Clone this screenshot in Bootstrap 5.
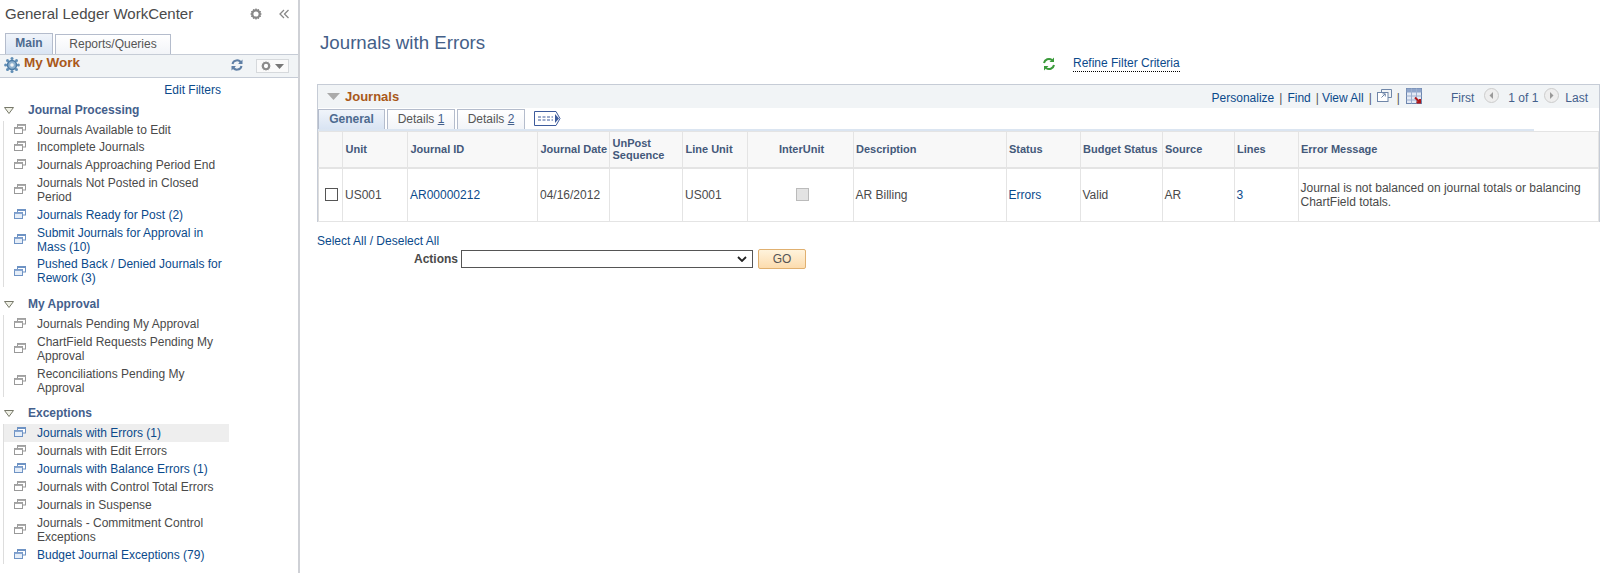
<!DOCTYPE html>
<html lang="en"><head><meta charset="utf-8"><title>Journals with Errors</title>
<link rel="stylesheet" href="https://cdn.jsdelivr.net/npm/bootstrap@5.3.0/dist/css/bootstrap.min.css">
<style>
html,body{height:100%;overflow:hidden}
body{font-family:"Liberation Sans",Arial,sans-serif;font-size:12px;color:#333;background:#fff;line-height:14px}
a{color:#0b4a8b;text-decoration:none}
.shell{height:573px}
.wc-side{width:300px;flex:none;border-right:2px solid #cfd1d6;height:573px}
.wc-title{font-size:15px;line-height:20px;padding:4px 0 0 5px;height:33px;color:#4a4a4a}
.wc-tabs{padding-left:5px;height:21px;gap:2px}
.wc-tab{border:1px solid #b4bccc;border-bottom:0;height:21px;text-align:center;line-height:19px;color:#555;background:linear-gradient(#fff,#f2f4f8)}
.wc-tab-on{width:48px;font-weight:700;color:#4d6a8f;background:linear-gradient(#f0f4fa,#d9e4f3)}
.wc-tab-off{width:116px;height:20px;margin-top:1px}
.mywork{height:24px;background:#f1f4f6;border-top:1px solid #c6ccd6;border-bottom:1px solid #c6ccd6;padding:0 9px 0 4px}
.mw-ic{margin-top:-3px}
.mywork-t{font-size:13.5px;font-weight:700;color:#a9581a;margin-left:4px;margin-top:-6px}
.mw-ref{margin-top:-3px}
.gearbtn{width:33px;height:14px;border:1px solid #d6d9dc;background:#fafafa;margin-left:13px}
.edit-f{width:221px;text-align:right;padding-top:5px;height:24px}
.sec-h{font-size:12px;font-weight:700;color:#44608c;line-height:16px;height:16px;padding-left:4px;margin-bottom:3px}
.sec-h span{margin-left:14px}
.sec-l{margin-left:3px;border-left:1px solid #ddd;width:226px}
.it{padding:2px 0;min-height:18px;color:#4a4a4a;padding-left:33px;position:relative}
.it svg{position:absolute;left:10px;top:50%;margin-top:-6px}
.it-on{background:#eee}
.it-tight{padding-top:1px}
.it-first{padding-bottom:1px;min-height:17px}
.sec-gap{height:8px}
.sec-gap-w{height:9px}
.wc-main{padding:0 7px 0 17px;min-width:0}
.pg-title{font-size:18.7px;line-height:22px;color:#446088;padding:32px 0 0 3px;height:54px}
.refine{height:30px;padding-left:725px;padding-top:3px}
.refine a{border-bottom:1px dotted #000;padding-bottom:2px;margin-left:17px;display:inline-block;line-height:12px}
.gridbox{border:1px solid #c6ccd6;border-bottom:0}
.grid-h{height:23px;background:#f1f4f6;padding:0 11px 0 9px}
.grid-t{font-size:13px;font-weight:700;color:#a9581a;margin-left:5px}
.grid-n{color:#44608c;padding-top:2px}
.grid-n svg{margin-top:-4px}
.sp-a{margin:0 5px}
.sp-b{margin:0 3px 0 5px}
.sp-c{margin:0 5px}
.sp-d{margin:0 6px 0 5px}
.pg-first{margin-left:29px}
.pg-c1{margin:0 9px 0 10px}
.pg-c2{margin:0 6px}
.sp-bar{color:#555}
.gtabs{height:21px;padding-top:1px;gap:2px}
.gt{height:20px;border:1px solid #b4bccc;border-bottom:0;line-height:18px;text-align:center;color:#555;background:linear-gradient(#fff,#f2f4f8)}
.gt u{color:#44608c}
.gt-on{font-weight:700;color:#4d6a8f;width:67px;background:linear-gradient(#f0f4fa,#d9e4f3)}
.gt-off{width:68px}
.gt-more{margin:2px 0 0 7px}
.gbar{height:2px;background:#dbe5f1;margin-right:65px}
.jt{width:100%;table-layout:fixed;border-collapse:collapse;font-size:12px;margin:0;border-left:1px solid #ddd}
.jt th{background:#f8f8f8;color:#44597a;font-size:11px;line-height:12px;font-weight:700;height:36px;padding:0 0 0 2.5px;border-right:1px solid #e4e4e4;border-top:1px solid #e4e4e4;border-bottom:2px solid #e4e4e4;vertical-align:middle}
.jt td{height:54px;padding:0 3px 0 2px;border-right:1px solid #e4e4e4;border-bottom:1px solid #e4e4e4;vertical-align:middle;background:#fff;color:#4a4a4a}
.ck{width:13px;height:13px;border:1px solid #555;display:block;margin:0 0 0 6px}
.ck-d{width:13px;height:13px;border:1px solid #bbb;background:#e3e3e3;display:block;margin:0 0 0 46px}
.sel-all{padding-top:12px;line-height:15px}
.act{height:20px}
.act b{width:144px;text-align:right;padding-right:3px;color:#4a4a4a}
.act-s{width:292px;height:18px;border:1px solid #555;background:#fff;padding-right:5px}
.go{width:48px;height:20px;margin-left:5px;border:1px solid #e0b070;border-radius:2px;background:linear-gradient(#fff3dc,#fcdcae);color:#555;text-align:center;line-height:18px}
</style></head>
<body>
<svg width="0" height="0" class="d-block"><defs>
<symbol id="w-g" viewBox="0 0 12 10"><rect x="3.500" y=".5" width="8" height="5.500" fill="#fff" stroke="#999"/><rect x="3.500" y=".5" width="8" height="1.500" fill="#aaa"/><rect x=".5" y="3.500" width="8" height="6" fill="#fff" stroke="#999"/><rect x=".5" y="3.500" width="8" height="1.500" fill="#aaa"/></symbol>
<symbol id="w-b" viewBox="0 0 12 10"><rect x="3.500" y=".5" width="8" height="5.500" fill="#fff" stroke="#6f93c4"/><rect x="3.500" y=".5" width="8" height="1.500" fill="#6f93c4"/><rect x=".5" y="3.500" width="8" height="6" fill="#e6eef8" stroke="#6f93c4"/><rect x=".5" y="3.500" width="8" height="1.500" fill="#8aa8d2"/></symbol>
<symbol id="tri" viewBox="0 0 10 7"><path d="M.5.5h9L5 6.500z" fill="#f0f1e6" stroke="#77786a"/></symbol>
<symbol id="gear" viewBox="0 0 14 14"><path d="M7 0l1.200 1.800 2.200-.6.500 2 2 .5-.6 2.200L14 7l-1.700 1.100.6 2.200-2 .5-.5 2-2.200-.6L7 14l-1.200-1.800-2.200.6-.5-2-2-.5.6-2.200L0 7l1.700-1.100-.6-2.200 2-.5.500-2 2.200.6z" fill="#888"/><circle cx="7" cy="7" r="3" fill="#fff"/></symbol>
</defs></svg>
<div class="d-flex shell">
<aside class="wc-side">
 <div class="wc-title d-flex justify-content-between"><span>General Ledger WorkCenter</span>
  <span class="d-flex pe-2 pt-1 align-items-start gap-3"><svg width="12" height="12"><use href="#gear"/></svg><svg width="12" height="12" viewBox="0 0 12 12" fill="none" stroke="#888" stroke-width="1.300"><path d="M6 2L2 6l4 4M10.500 2l-4 4 4 4"/></svg></span></div>
 <div class="wc-tabs d-flex"><div class="wc-tab wc-tab-on">Main</div><div class="wc-tab wc-tab-off">Reports/Queries</div></div>
 <div class="mywork d-flex align-items-center">
  <svg class="mw-ic" width="16" height="16" viewBox="0 0 16 16"><g fill="#5f8db5"><circle cx="8" cy="1.600" r="1.500"/><circle cx="8" cy="14.400" r="1.500"/><circle cx="1.600" cy="8" r="1.500"/><circle cx="14.400" cy="8" r="1.500"/><circle cx="3.500" cy="3.500" r="1.500"/><circle cx="12.500" cy="3.500" r="1.500"/><circle cx="3.500" cy="12.500" r="1.500"/><circle cx="12.500" cy="12.500" r="1.500"/></g><circle cx="8" cy="8" r="4.500" fill="#8fb2cf" stroke="#4a7aa5" stroke-width="1.500"/><circle cx="8" cy="8" r="1.800" fill="#f1f4f6"/></svg>
  <span class="mywork-t flex-grow-1">My Work</span>
  <svg class="mw-ref" width="12" height="12" viewBox="0 0 12 12" fill="none" stroke="#5f7fa5" stroke-width="2"><path d="M1.500 5A4.500 4.500 0 0 1 10 4M10.500 7A4.500 4.500 0 0 1 2 8"/><path d="M11.500.5v4.500H7zM.5 11.500V7H5z" fill="#5f7fa5" stroke="none"/></svg>
  <span class="gearbtn d-flex align-items-center justify-content-center gap-1"><svg width="10" height="10"><use href="#gear"/></svg><svg width="9" height="5" viewBox="0 0 9 5"><path d="M0 0h9L4.500 5z" fill="#777"/></svg></span>
 </div>
 <div class="edit-f"><a href="#">Edit Filters</a></div>
 <div class="sec-h d-flex align-items-center"><svg width="10" height="7"><use href="#tri"/></svg><span>Journal Processing</span></div>
 <div class="sec-l">
  <div class="it it-first"><svg width="12" height="10"><use href="#w-g"/></svg>Journals Available to Edit</div>
  <div class="it"><svg width="12" height="10"><use href="#w-g"/></svg>Incomplete Journals</div>
  <div class="it"><svg width="12" height="10"><use href="#w-g"/></svg>Journals Approaching Period End</div>
  <div class="it"><svg width="12" height="10"><use href="#w-g"/></svg>Journals Not Posted in Closed Period</div>
  <div class="it"><svg width="12" height="10"><use href="#w-b"/></svg><a href="#">Journals Ready for Post (2)</a></div>
  <div class="it"><svg width="12" height="10"><use href="#w-b"/></svg><a href="#">Submit Journals for Approval in Mass (10)</a></div>
  <div class="it it-tight"><svg width="12" height="10"><use href="#w-b"/></svg><a href="#">Pushed Back / Denied Journals for Rework (3)</a></div>
 </div>
 <div class="sec-gap-w"></div>
 <div class="sec-h d-flex align-items-center"><svg width="10" height="7"><use href="#tri"/></svg><span>My Approval</span></div>
 <div class="sec-l">
  <div class="it"><svg width="12" height="10"><use href="#w-g"/></svg>Journals Pending My Approval</div>
  <div class="it"><svg width="12" height="10"><use href="#w-g"/></svg>ChartField Requests Pending My Approval</div>
  <div class="it"><svg width="12" height="10"><use href="#w-g"/></svg>Reconciliations Pending My Approval</div>
 </div>
 <div class="sec-gap"></div>
 <div class="sec-h d-flex align-items-center"><svg width="10" height="7"><use href="#tri"/></svg><span>Exceptions</span></div>
 <div class="sec-l">
  <div class="it it-on"><svg width="12" height="10"><use href="#w-b"/></svg><a href="#">Journals with Errors (1)</a></div>
  <div class="it"><svg width="12" height="10"><use href="#w-g"/></svg>Journals with Edit Errors</div>
  <div class="it"><svg width="12" height="10"><use href="#w-b"/></svg><a href="#">Journals with Balance Errors (1)</a></div>
  <div class="it"><svg width="12" height="10"><use href="#w-g"/></svg>Journals with Control Total Errors</div>
  <div class="it"><svg width="12" height="10"><use href="#w-g"/></svg>Journals in Suspense</div>
  <div class="it"><svg width="12" height="10"><use href="#w-g"/></svg>Journals - Commitment Control Exceptions</div>
  <div class="it"><svg width="12" height="10"><use href="#w-b"/></svg><a href="#">Budget Journal Exceptions (79)</a></div>
 </div>
</aside>
<main class="wc-main flex-grow-1">
 <div class="pg-title">Journals with Errors</div>
 <div class="refine d-flex align-items-start"><svg width="14" height="14" viewBox="0 0 14 14" fill="none" stroke="#3a9a3a" stroke-width="2"><path d="M2 6a5 5 0 0 1 8-3M12 8a5 5 0 0 1-8 3"/><path d="M12 .5v4.500H7.500zM2 13.500V9h4.500z" fill="#3a9a3a" stroke="none"/></svg><a href="#">Refine Filter Criteria</a></div>
 <div class="gridbox">
  <div class="grid-h d-flex align-items-center justify-content-between">
   <div class="d-flex align-items-center"><svg width="13" height="8" viewBox="0 0 13 8"><path d="M0 0h13L6.500 7z" fill="#aaa"/></svg><span class="grid-t">Journals</span></div>
   <div class="grid-n d-flex align-items-center">
    <a href="#">Personalize</a><span class="sp-bar sp-a">|</span><a href="#">Find</a><span class="sp-bar sp-b">|</span><a href="#">View All</a><span class="sp-bar sp-c">|</span>
    <svg width="15" height="13" viewBox="0 0 15 13" fill="none" stroke="#6f86a8"><path d="M4.500 3.500V.5h10v8h-3.500"/><rect x=".5" y="3.500" width="10.500" height="9" fill="#fff"/><path d="M4.500 8.500l3.500-3.500M5.500 4.800H8.300V7.500"/></svg>
    <span class="sp-bar sp-d">|</span>
    <svg width="16" height="16" viewBox="0 0 16 16"><rect x=".5" y=".5" width="15" height="15" fill="#e3e9f4" stroke="#6c84ad"/><rect x=".5" y=".5" width="15" height="4" fill="#8fa5ca"/><path d="M.5 8h15M.5 12h15M5.500.5v15M10.500.5v15" stroke="#9db0cf"/><path d="M9 9.500l5 5m0-3.500v3.500h-3.500" stroke="#b01818" stroke-width="2" fill="none"/></svg>
    <span class="pg-first">First</span>
    <svg class="pg-c1" width="15" height="15" viewBox="0 0 15 15"><circle cx="7.500" cy="7.500" r="7" fill="#eee" stroke="#ccc"/><path d="M9 4v7L5.500 7.500z" fill="#999"/></svg>
    <span>1 of 1</span>
    <svg class="pg-c2" width="15" height="15" viewBox="0 0 15 15"><circle cx="7.500" cy="7.500" r="7" fill="#eee" stroke="#ccc"/><path d="M6 4v7l3.500-3.500z" fill="#999"/></svg>
    <span>Last</span>
   </div>
  </div>
  <div class="gtabs d-flex">
   <div class="gt gt-on">General</div><div class="gt gt-off">Details <u>1</u></div><div class="gt gt-off">Details <u>2</u></div>
   <svg class="gt-more" width="27" height="15" viewBox="0 0 27 15"><path d="M.5.5H22l4 7-4 7H.5z" fill="#fff" stroke="#3d5b9c"/><path d="M4 6h15M4 9h15" stroke="#3d5b9c" stroke-dasharray="3 1.500"/><path d="M21 3l4 4.500-4 4.500z" fill="#3d5b9c"/></svg>
  </div>
  <div class="gbar"></div>
  <table class="jt">
   <colgroup><col style="width:24px"><col style="width:65px"><col style="width:130px"><col style="width:72px"><col style="width:73px"><col style="width:65px"><col style="width:105.500px"><col style="width:153px"><col style="width:74px"><col style="width:82px"><col style="width:72px"><col style="width:64px"><col></colgroup>
   <thead><tr><th></th><th>Unit</th><th>Journal ID</th><th>Journal Date</th><th>UnPost Sequence</th><th>Line Unit</th><th class="text-center">InterUnit</th><th>Description</th><th>Status</th><th>Budget Status</th><th>Source</th><th>Lines</th><th>Error Message</th></tr></thead>
   <tbody><tr><td class="p-0"><span class="ck"></span></td><td>US001</td><td><a href="#">AR00000212</a></td><td>04/16/2012</td><td></td><td>US001</td><td><span class="ck-d"></span></td><td>AR Billing</td><td><a href="#">Errors</a></td><td>Valid</td><td>AR</td><td><a href="#">3</a></td><td>Journal is not balanced on journal totals or balancing ChartField totals.</td></tr></tbody>
  </table>
 </div>
 <div class="sel-all"><a href="#">Select All / Deselect All</a></div>
 <div class="act d-flex align-items-center"><b>Actions</b><span class="act-s d-flex align-items-center justify-content-end"><svg width="10" height="6" viewBox="0 0 10 6" fill="none" stroke="#222" stroke-width="1.800"><path d="M1 1l4 4 4-4"/></svg></span><span class="go">GO</span></div>
</main>
</div>
<script src="https://cdn.jsdelivr.net/npm/bootstrap@5.3.0/dist/js/bootstrap.bundle.min.js"></script>
</body></html>
